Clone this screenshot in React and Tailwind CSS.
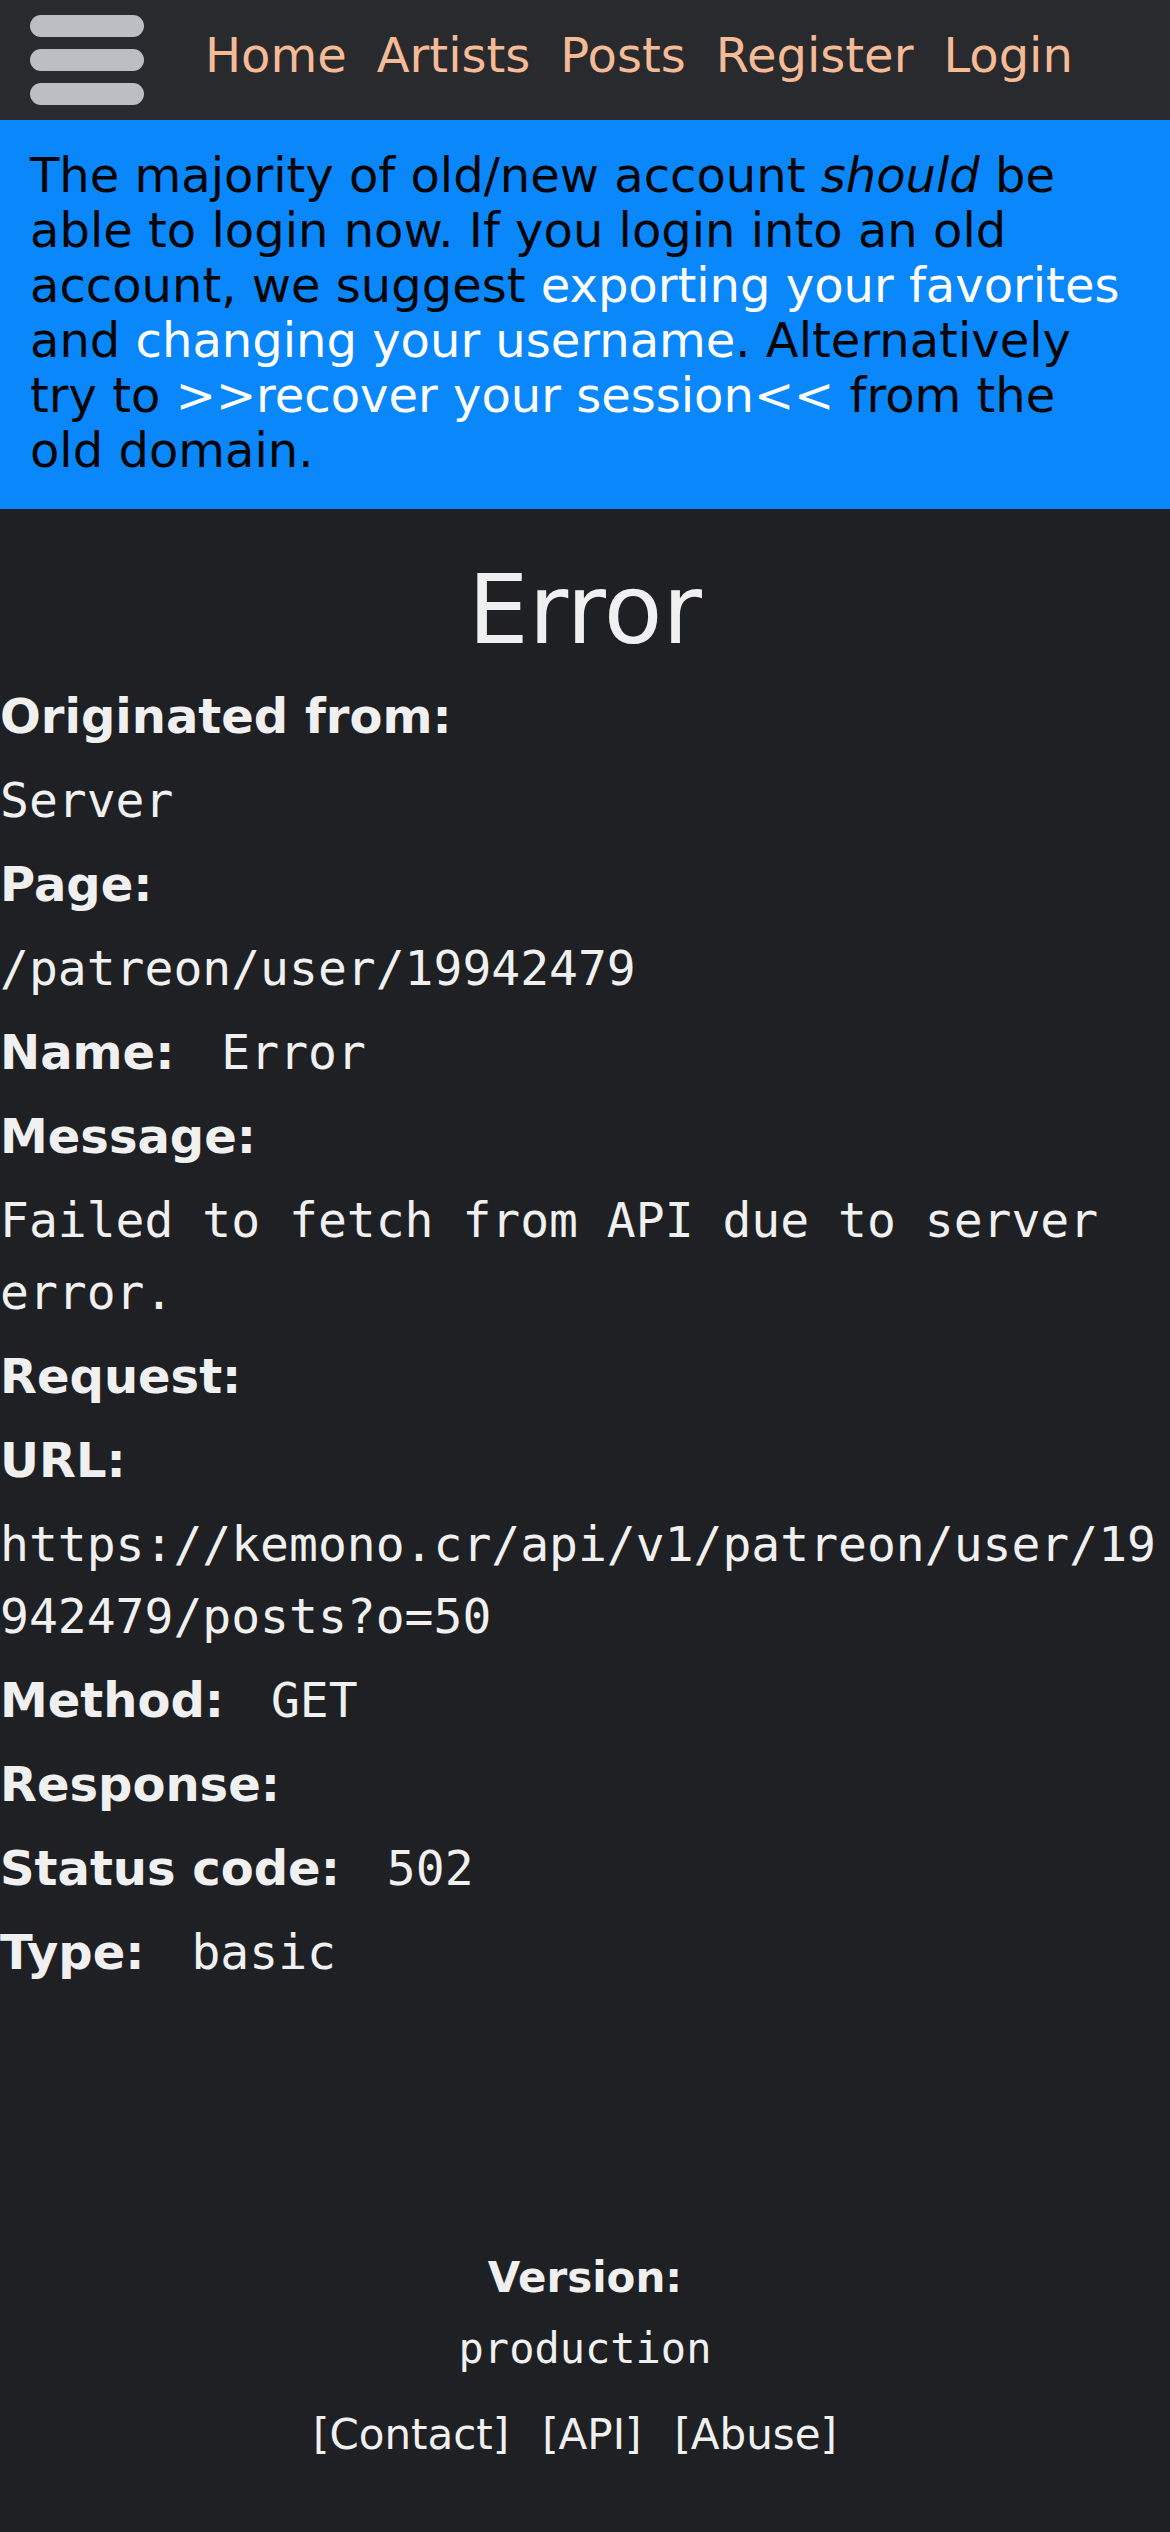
import React from "react";

const sans = { fontFamily: '"DejaVu Sans", "Liberation Sans", sans-serif' };
const mono = { fontFamily: '"DejaVu Sans Mono", "Liberation Mono", monospace' };

function Header() {
  return (
    <header className="flex h-[120px] items-center bg-[#282a2e] pl-[30px]">
      <button className="flex w-[114px] flex-col gap-[12px]">
        <span className="block h-[22px] w-full rounded-full bg-[#bcbec3]"></span>
        <span className="block h-[22px] w-full rounded-full bg-[#bcbec3]"></span>
        <span className="block h-[22px] w-full rounded-full bg-[#bcbec3]"></span>
      </button>
      <nav className="mb-[10px] ml-[61px] flex gap-[30px] text-[48px] leading-[56px] text-[#f5ba96]">
        <a href="#">Home</a>
        <a href="#">Artists</a>
        <a href="#">Posts</a>
        <a href="#">Register</a>
        <a href="#">Login</a>
      </nav>
    </header>
  );
}

function Notice() {
  return (
    <div className="bg-[#0a87fa] px-[30px] pt-[28px] pb-[31px] text-[48px] leading-[55px] text-[#050505]">
      The majority of old/new account <i>should</i> be able to login now. If
      you login into an old account, we suggest{" "}
      <a href="#" className="text-white">
        exporting your favorites
      </a>{" "}
      and{" "}
      <a href="#" className="text-white">
        changing your username
      </a>
      . Alternatively try to{" "}
      <a href="#" className="text-white">
        &gt;&gt;recover your session&lt;&lt;
      </a>{" "}
      from the old domain.
    </div>
  );
}

function Label({ children }) {
  return <div className="mb-[12px] font-bold leading-[72px]">{children}</div>;
}

function Value({ children, breakAll }) {
  return (
    <div className={breakAll ? "mb-[12px] break-all leading-[72px]" : "mb-[12px] leading-[72px]"} style={mono}>
      {children}
    </div>
  );
}

function Pair({ label, value }) {
  return (
    <div className="mb-[12px] flex gap-[47px] leading-[72px]">
      <span className="font-bold">{label}</span>
      <span style={mono}>{value}</span>
    </div>
  );
}

export default function App() {
  return (
    <div className="flex min-h-[2532px] flex-col bg-[#1f2023] text-[#f0f0f0]" style={sans}>
      <Header />
      <Notice />
      <main className="text-[48px]">
        <h1 className="mt-[44px] mb-[12px] text-center text-[96px] leading-[115px]">Error</h1>
        <Label>Originated from:</Label>
        <Value>Server</Value>
        <Label>Page:</Label>
        <Value>/patreon/user/19942479</Value>
        <Pair label="Name:" value="Error" />
        <Label>Message:</Label>
        <Value>Failed to fetch from API due to server error.</Value>
        <Label>Request:</Label>
        <Label>URL:</Label>
        <Value breakAll>https://kemono.cr/api/v1/patreon/user/19942479/posts?o=50</Value>
        <Pair label="Method:" value="GET" />
        <Label>Response:</Label>
        <Pair label="Status code:" value="502" />
        <Pair label="Type:" value="basic" />
      </main>
      <footer className="mt-auto pb-[66px] text-center text-[42px] leading-[63px]">
        <div className="font-bold">Version:</div>
        <div className="mt-[8px]" style={mono}>
          production
        </div>
        <div className="mt-[23px] flex justify-center gap-[33px] pr-[20px]">
          <a href="#">[Contact]</a>
          <a href="#">[API]</a>
          <a href="#">[Abuse]</a>
        </div>
      </footer>
    </div>
  );
}
